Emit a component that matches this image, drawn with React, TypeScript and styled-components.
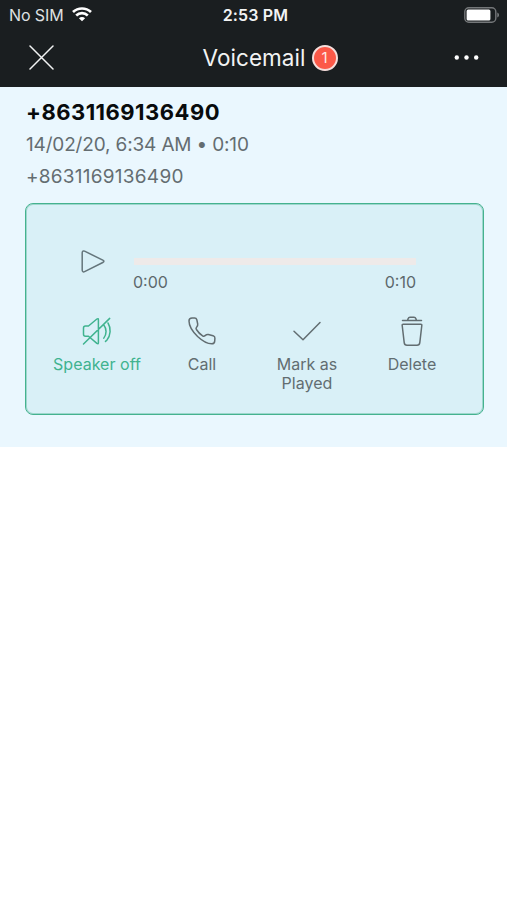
import React from "react";
import styled, { createGlobalStyle } from "styled-components";

const GlobalStyle = createGlobalStyle`
  * { box-sizing: border-box; }
  body { margin: 0; background: #fff; font-family: Inter, "Liberation Sans", sans-serif; }
`;

const Screen = styled.main`
  width: 507px;
  min-height: 900px;
  background: #fff;
`;

const Header = styled.header`
  height: 87px;
  background: #1a1e20;
  color: #f2f3f3;
`;

const StatusBar = styled.div`
  height: 30px;
  padding: 0 7px 0 9px;
  display: grid;
  grid-template-columns: 1fr auto 1fr;
  align-items: center;
`;

const Carrier = styled.div`
  display: flex;
  align-items: center;
  gap: 8px;
  font-size: 16px;
  line-height: 30px;
  letter-spacing: -0.1px;
  color: #dfe1e2;
`;

const WifiSlot = styled.span`
  display: flex;
  padding-bottom: 1px;
`;

const Clock = styled.div`
  font-size: 16px;
  line-height: 30px;
  font-weight: 600;
  letter-spacing: 0.15px;
  padding-left: 2px;
`;

const BatterySlot = styled.div`
  display: flex;
  justify-content: flex-end;
`;

const NavBar = styled.nav`
  height: 55px;
  padding: 0 26px 0 28px;
  display: grid;
  grid-template-columns: 1fr auto 1fr;
  align-items: center;
`;

const IconButton = styled.button<{ $align: string }>`
  justify-self: ${(p) => p.$align};
  padding: 0;
  border: 0;
  background: none;
  color: inherit;
  display: flex;
`;

const Title = styled.h1`
  margin: 0 0 0 31px;
  display: flex;
  align-items: center;
  gap: 6px;
  font-size: 22.5px;
  line-height: 30px;
  font-weight: 400;
  letter-spacing: 0.05px;
`;

const Badge = styled.span`
  width: 26px;
  height: 26px;
  border: 2px solid #f6dedb;
  border-radius: 50%;
  background: #fc5948;
  color: #ffe9e5;
  font-size: 15px;
  line-height: 22px;
  letter-spacing: 0;
  text-align: center;
`;

const Message = styled.section`
  height: 360px;
  padding: 10px 23px 0 25px;
  background: #eaf7fe;
`;

const Caller = styled.h2`
  margin: 0 0 1px 1px;
  color: #080b0c;
  font-size: 22px;
  line-height: 31px;
  font-weight: 700;
  letter-spacing: 0.48px;
`;

const Detail = styled.p<{ $tracking: number }>`
  margin: 0 0 0 1px;
  color: #646d71;
  font-size: 19px;
  line-height: 31.5px;
  letter-spacing: ${(p) => p.$tracking}px;
`;

const Player = styled.div`
  height: 212px;
  margin-top: 11px;
  padding: 42px 18px 0 18px;
  border: 1px solid #45b28f;
  box-shadow: inset 0 0 0 1px rgba(69, 178, 143, 0.4);
  border-radius: 8px;
  background: #d9f0f7;
`;

const Playback = styled.div`
  display: flex;
  padding: 0 49px 0 36px;
  gap: 27px;
  color: #64757b;
`;

const Timeline = styled.div`
  flex: 1;
  padding-top: 12px;
`;

const Track = styled.div`
  height: 7px;
  margin-left: 1px;
  background: #eeeae9;
`;

const Times = styled.div`
  display: flex;
  justify-content: space-between;
  padding-top: 7px;
  font-size: 16px;
  line-height: 20px;
  color: #5d686c;
`;

const Actions = styled.div`
  display: grid;
  grid-template-columns: repeat(4, 105px);
  padding-top: 23px;
`;

const Action = styled.button<{ $active?: boolean }>`
  padding: 0;
  border: 0;
  background: none;
  display: flex;
  flex-direction: column;
  align-items: center;
  gap: 8px;
  font-family: inherit;
  font-size: 16px;
  line-height: 19px;
  letter-spacing: 0.03px;
  color: ${(p) => (p.$active ? "#3fb38f" : "#626d71")};
`;

const Label = styled.span`
  padding-left: 1px;
`;

const Glyph = styled.svg`
  display: block;
  fill: none;
  stroke: currentColor;
  stroke-width: 1.5;
  stroke-linecap: round;
  stroke-linejoin: round;
`;

const WifiIcon = () => (
  <svg width="20" height="15" viewBox="0 0 20 15" fill="none" stroke="#fff" strokeWidth="2.7">
    <path d="M1 5.1C6.1.3 13.9.3 19 5.1M4.2 8.4c3.3-3.1 8.3-3.1 11.6 0" />
    <path d="M6.9 11.2c1.8-1.7 4.4-1.7 6.2 0L10 14.3z" fill="#fff" stroke="none" />
  </svg>
);

const BatteryIcon = () => (
  <svg width="36" height="16" viewBox="0 0 36 16">
    <rect x=".8" y=".8" width="31" height="14.4" rx="4" fill="none" stroke="#747779" strokeWidth="1.4" />
    <rect x="2.6" y="2.5" width="23.8" height="10.9" rx="1.5" fill="#fff" />
    <path d="M33.4 5.5c2 .7 2 4.3 0 5z" fill="#85888a" />
  </svg>
);

const SpeakerOffIcon = () => (
  <Glyph width="32" height="32" viewBox="0 0 32 32">
    <path d="M2.5 13q0-2 2-2h3l8.4-7q1.5-1 1.5.7v23q0 1.7-1.5.7l-8.4-7.2h-3q-2 0-2-2zM2.5 29 28.7 3.4M22.8 10c3 3.8 3 9.4 0 13.1M27 8c3.2 5.2 2.8 12.5-1.2 17.2l-1.3 1.2" />
  </Glyph>
);

const PhoneIcon = () => (
  <Glyph width="32" height="32" viewBox="0 0 32 32">
    <path d="M3 6c0-1.7 1.2-2.9 3.1-2.9h2.5c1.1 0 1.9.6 2.2 1.6l.9 4.3c.2 1.3-.1 2-1 3-.8.8-.9 1.6-.3 2.5 1.6 2.6 3.7 4.7 6.2 6.3.9.6 1.7.5 2.5-.2 1.1-1 2-1.3 3.2-1.1l4.8 1.2c1.3.4 1.9 1.2 1.8 2.4l-.2 3c-.1 1.7-1.3 2.7-3 2.7-4.5 0-9.4-2.9-14.1-7.3C6.9 16.9 3 10.9 3 6z" />
  </Glyph>
);

const CheckIcon = () => (
  <Glyph width="32" height="32" viewBox="0 0 32 32">
    <path d="m3 16.3 9 8.5L29 7.5" />
  </Glyph>
);

const TrashIcon = () => (
  <Glyph width="32" height="32" viewBox="0 0 32 32">
    <path d="M6.5 5.5h19M11.5 5.5l.7-2q.4-1.2 1.8-1.2h4q1.4 0 1.8 1.2l.7 2M7.2 9.3h17.6q1.2 0 1 1.2l-2 17.2q-.3 2.6-2.8 2.6H11q-2.5 0-2.8-2.6l-2-17.2q-.2-1.2 1-1.2z" />
  </Glyph>
);

const actions = [
  { label: "Speaker off", icon: <SpeakerOffIcon />, active: true },
  { label: "Call", icon: <PhoneIcon /> },
  { label: <>Mark as<br />Played</>, icon: <CheckIcon /> },
  { label: "Delete", icon: <TrashIcon /> },
];

export default function App() {
  return (
    <Screen>
      <GlobalStyle />
      <Header>
        <StatusBar>
          <Carrier>No SIM <WifiSlot><WifiIcon /></WifiSlot></Carrier>
          <Clock>2:53 PM</Clock>
          <BatterySlot><BatteryIcon /></BatterySlot>
        </StatusBar>
        <NavBar>
          <IconButton $align="start" aria-label="Close">
            <Glyph width="26" height="26" viewBox="0 0 26 26">
              <path d="m2 1 23 23M25 1 2 24" />
            </Glyph>
          </IconButton>
          <Title>Voicemail <Badge>1</Badge></Title>
          <IconButton $align="end" aria-label="More">
            <svg width="28" height="8" viewBox="0 0 28 8" fill="#fff">
              <circle cx="3.8" cy="3.5" r="2.2" />
              <circle cx="13.5" cy="3.5" r="2.2" />
              <circle cx="23.2" cy="3.5" r="2.2" />
            </svg>
          </IconButton>
        </NavBar>
      </Header>
      <Message>
        <Caller>+8631169136490</Caller>
        <Detail $tracking={-0.16}>14/02/20, 6:34 AM • 0:10</Detail>
        <Detail $tracking={0.25}>+8631169136490</Detail>
        <Player>
          <Playback>
            <Glyph width="26" height="32" viewBox="0 0 26 32">
              <path d="M2.2 6.7c0-1.6 1-2.2 2.4-1.5l18.2 8.9c1.5.7 1.5 1.7 0 2.4L4.6 25.6c-1.4.7-2.4.1-2.4-1.5z" />
            </Glyph>
            <Timeline>
              <Track />
              <Times><span>0:00</span><span>0:10</span></Times>
            </Timeline>
          </Playback>
          <Actions>
            {actions.map((action, index) => (
              <Action key={index} $active={action.active}>
                {action.icon}
                <Label>{action.label}</Label>
              </Action>
            ))}
          </Actions>
        </Player>
      </Message>
    </Screen>
  );
}
